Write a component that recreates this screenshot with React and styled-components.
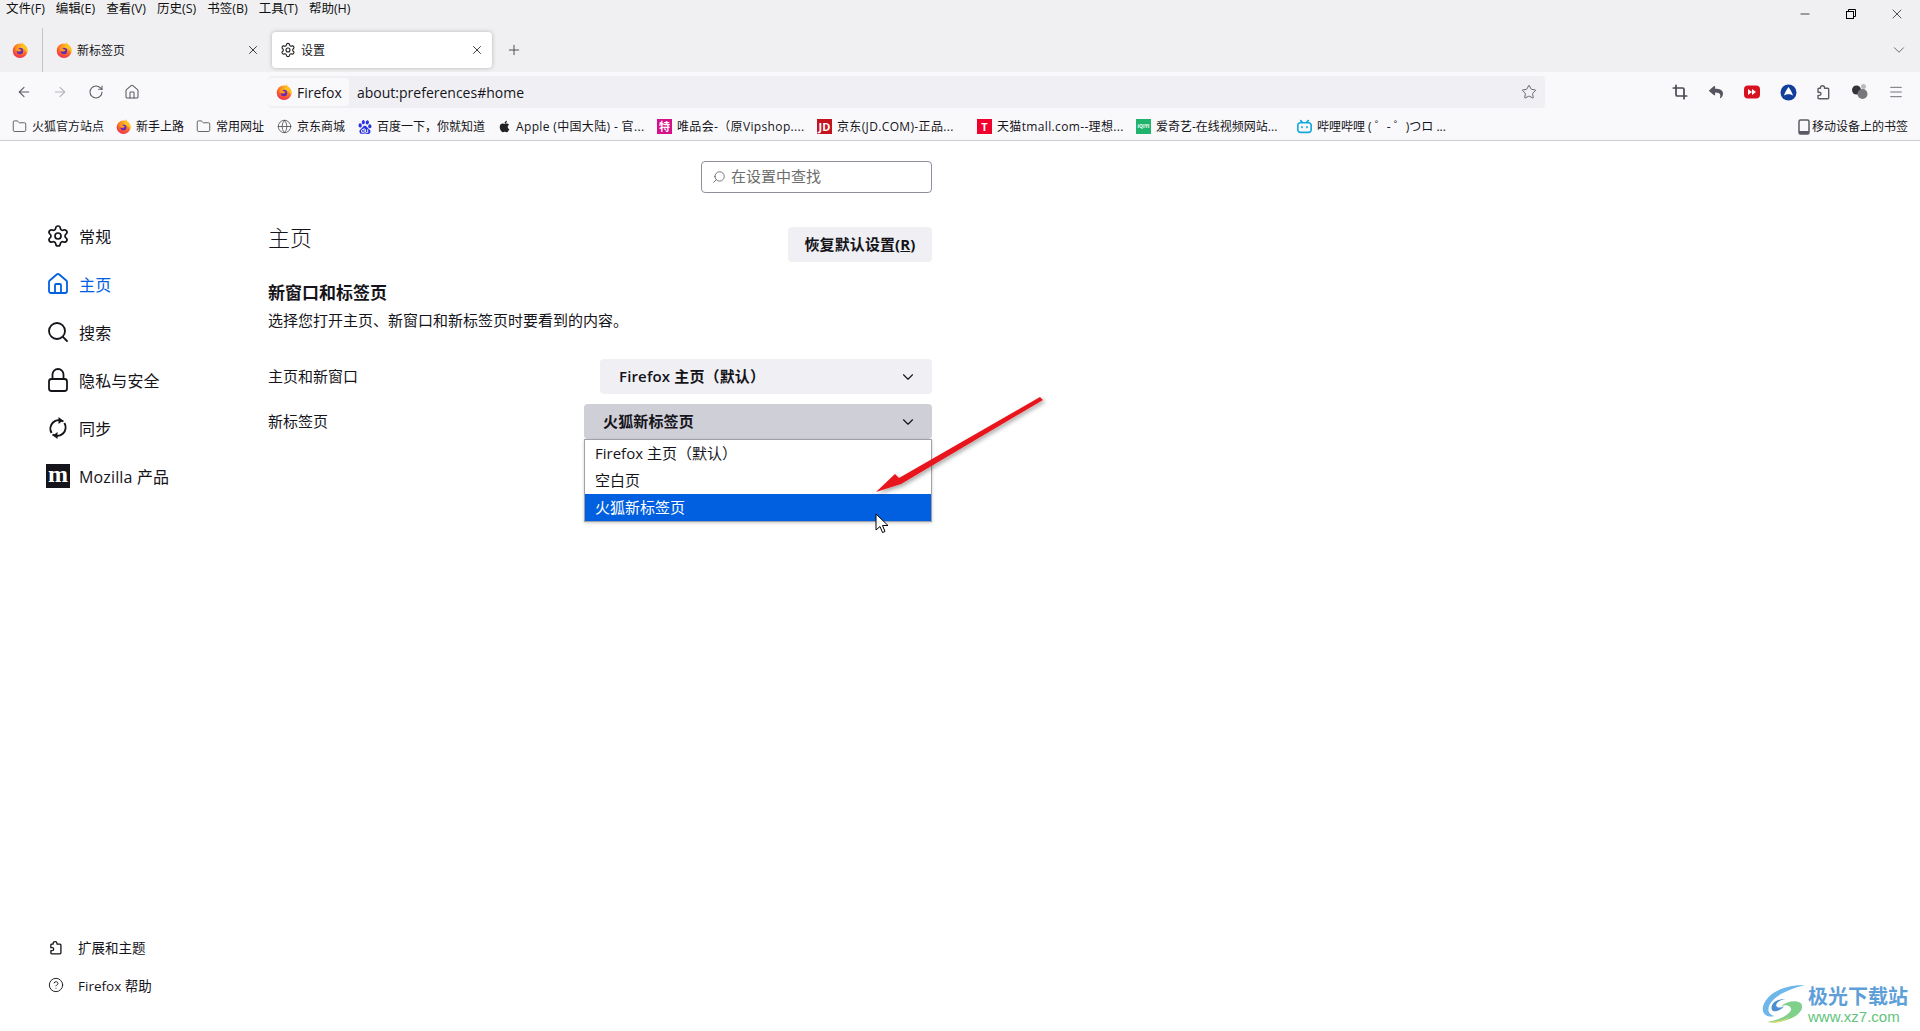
import React from 'react'
import styled, { createGlobalStyle } from 'styled-components'
import {
  ArrowLeft, ArrowRight, RotateCw, House, Star, Crop, Menu as MenuIcon, Folder, Globe,
  Settings, Search, CircleHelp, X, Plus, ChevronDown, Minus,
} from 'lucide-react'
import { FaApple, FaReply } from 'react-icons/fa'
import { SiBaidu, SiBilibili } from 'react-icons/si'

const FONT = `"Open Sans", "Noto Sans CJK SC", sans-serif`

const GlobalStyle = createGlobalStyle`
  html, body { margin: 0; padding: 0; background: #fff; overflow: hidden; }
  body { font-family: ${FONT}; color: #15141a; }
  * { box-sizing: border-box; }
`

const FirefoxLogo = ({ size = 16 }) => (
  <svg width={size} height={size} viewBox="0 0 32 32" style={{ flex: 'none' }}>
    <defs>
      <radialGradient id="ffBody" cx="0.6" cy="0.25" r="0.9">
        <stop offset="0" stopColor="#ffcb2e" />
        <stop offset="0.45" stopColor="#ff7a1f" />
        <stop offset="0.85" stopColor="#f0294f" />
        <stop offset="1" stopColor="#d81b78" />
      </radialGradient>
    </defs>
    <circle cx="16" cy="17.500" r="14.500" fill="url(#ffBody)" />
    <path d="M21 0c1 5 8 7 10 14 1 4 0 7-1 9-1-6-6-9-9-12-2-3-2-7 0-11z" fill="#ffc21f" />
    <circle cx="16" cy="18" r="6.500" fill="#6a2bb0" />
    <path d="M7 13c3-4 8-5 12-3-3 0-5 1-6 3l6 3c-1 2-3 3-6 3-4 0-6-3-6-6z" fill="#ff9a1f" />
  </svg>
)

const Puzzle = ({ size = 16, color = '#15141a' }) => (
  <svg width={size} height={size} viewBox="0 0 16 16" fill="none" stroke={color} strokeWidth="1.4" strokeLinejoin="round" style={{ flex: 'none' }}>
    <path d="M6.5 1.7c1.3 0 2 .8 2 1.8v.8h3.2c.6 0 1 .4 1 1v8.4c0 .6-.4 1-1 1H3c-.6 0-1-.4-1-1v-2.3h1.2c1 0 1.8-.6 1.8-1.6S4.200 8.200 3.200 8.200H2V5.300c0-.6.400-1 1-1h1.500v-.8c0-1 .700-1.800 2-1.800z" />
  </svg>
)

const SyncIcon = () => (
  <svg width="24" height="24" viewBox="0 0 24 24" fill="none" stroke="#15141a" strokeWidth="2">
    <path d="M17.500 5.500A8.500 8.500 0 0 0 5.600 17" />
    <path d="M6.500 18.500A8.500 8.500 0 0 0 18.400 7" />
    <path d="M12.500 1v7l4.500-3.500z" fill="#15141a" stroke="none" />
    <path d="M11.500 23v-7L7 19.500z" fill="#15141a" stroke="none" />
  </svg>
)

const LockIcon = () => (
  <svg width="24" height="24" viewBox="0 0 24 24" fill="none" stroke="#15141a" strokeWidth="1.800">
    <rect x="3" y="11" width="18" height="12" rx="2.500" />
    <path d="M6.500 11V6.500a5.500 5.500 0 0 1 11 0V11" />
  </svg>
)

const RedPlay = () => (
  <svg width="16" height="16" viewBox="0 0 16 16">
    <rect y="1.500" width="16" height="13" rx="4" fill="#d7121f" />
    <path d="M4 5l4 3-4 3zM8 5l4 3-4 3z" fill="#fff" />
  </svg>
)

const BlueRing = () => (
  <svg width="17" height="17" viewBox="0 0 17 17">
    <circle cx="8.500" cy="8.500" r="8" fill="#123f9c" />
    <path d="M8.500 3c1.500 2 3.500 5 4.500 8.500-1.500-1-2.800-1.300-4.500-1.300S5.500 10.500 4 11.500C5 8 7 5 8.500 3z" fill="#fff" />
  </svg>
)

const Balls = () => (
  <svg width="18" height="18" viewBox="0 0 18 18">
    <circle cx="12.500" cy="3.500" r="2.500" fill="#bbb" />
    <circle cx="5.500" cy="7" r="4.500" fill="#33333a" />
    <circle cx="11.500" cy="11" r="5" fill="#77777c" />
  </svg>
)

const PhoneIcon = () => (
  <svg width="12" height="16" viewBox="0 0 12 16" style={{ flex: 'none', marginRight: 2 }}>
    <rect x="1" y="1" width="10" height="14" rx="1.500" fill="none" stroke="#5b5b66" strokeWidth="1.500" />
    <rect x="1" y="12" width="10" height="3" fill="#5b5b66" />
  </svg>
)

const RestoreIcon = () => (
  <svg width="10" height="10" viewBox="0 0 10 10" fill="none" stroke="#000" strokeWidth="1">
    <rect x="0.500" y="2.500" width="7" height="7" />
    <path d="M2.500 2.500v-2h7v7h-2" />
  </svg>
)

const RedArrow = () => (
  <ArrowLayer width="200" height="130" viewBox="860 385 200 130">
    <defs>
      <filter id="arrowShadow" x="-20%" y="-20%" width="140%" height="140%">
        <feDropShadow dx="2" dy="2" stdDeviation="2" floodColor="#000" floodOpacity="0.35" />
      </filter>
    </defs>
    <path d="M1040 397l3 3-142 84 -25 8 19-18 4 4z" fill="#e8141c" filter="url(#arrowShadow)" />
  </ArrowLayer>
)

const PointerCursor = () => (
  <CursorLayer width="14" height="22" viewBox="0 0 14 22">
    <path d="M1 1v16l4-3.500 2.500 6 2.500-1-2.500-6H13z" fill="#fff" stroke="#000" strokeWidth="1" strokeLinejoin="round" />
  </CursorLayer>
)

const Swirl = () => (
  <svg width="46" height="44" viewBox="0 0 42 44" preserveAspectRatio="none">
    <path d="M40 3C22 3 6 10 2 24c-2 8 4 12 10 10C5 32 5 24 12 17 19 10 30 6 40 3z" fill="#6db7ea" />
    <path d="M10 28c-2-6 4-11 12-11 -5 1-9 4-8 7 1 2 4 2 7 0-2 4-9 7-11 4z" fill="#4b8fd0" />
    <path d="M18 24c6-5 14-6 18-3 4 4 0 12-10 16-7 3-14 4-20 3 10-2 18-6 21-11 2-4-3-7-9-5z" fill="#7fd08a" />
    <path d="M6 40c8 0 16-2 21-6-4 5-12 8-21 6z" fill="#e4dc6a" />
  </svg>
)

const menuItems = ['文件(F)', '编辑(E)', '查看(V)', '历史(S)', '书签(B)', '工具(T)', '帮助(H)']

const App = () => {
  const bookmarks = [
    { text: '火狐官方站点', w: 104, icon: <Folder size={15} strokeWidth={1.3} color="#444" /> },
    { text: '新手上路', w: 80, icon: <FirefoxLogo size={15} /> },
    { text: '常用网址', w: 81, icon: <Folder size={15} strokeWidth={1.3} color="#444" /> },
    { text: '京东商城', w: 81, icon: <Globe size={15} strokeWidth={1.2} color="#444" /> },
    { text: '百度一下，你就知道', w: 140, icon: <SiBaidu size={14} color="#2932e1" /> },
    { text: 'Apple (中国大陆) - 官...', w: 159, wide: true, icon: <FaApple size={13} color="#222" /> },
    { text: '唯品会-（原Vipshop....', w: 160, wide: true, icon: <LogoTile $bg="#d6108b">特</LogoTile> },
    { text: '京东(JD.COM)-正品...', w: 160, wide: true, icon: <LogoTile $bg="#c5121f">JD</LogoTile> },
    { text: '天猫tmall.com--理想...', w: 159, wide: true, icon: <LogoTile $bg="#f2002d">T</LogoTile> },
    { text: '爱奇艺-在线视频网站...', w: 161, icon: <LogoTile $bg="#1fb36b" $small>iQIYI</LogoTile> },
    { text: '哔哩哔哩 ( ゜- ゜)つロ ...', w: 170, icon: <SiBilibili size={15} color="#14a9dc" /> },
  ]
  const sideItems = [
    { text: '常规', icon: <Settings size={24} strokeWidth={1.7} /> },
    { text: '主页', icon: <House size={24} strokeWidth={1.8} />, active: true },
    { text: '搜索', icon: <Search size={24} strokeWidth={1.8} /> },
    { text: '隐私与安全', icon: <LockIcon /> },
    { text: '同步', icon: <SyncIcon /> },
    { text: 'Mozilla 产品', icon: <MozillaMark>m</MozillaMark> },
  ]

  return (
    <Page>
      <GlobalStyle />
      <Chrome>
        <TitleBar>
          <MenuBar>
            {menuItems.map((m) => <MenuItem key={m}>{m}</MenuItem>)}
          </MenuBar>
          <WindowControls>
            <WinButton><Minus size={14} strokeWidth={1.2} color="#000" /></WinButton>
            <WinButton><RestoreIcon /></WinButton>
            <WinButton><X size={16} strokeWidth={1} color="#000" /></WinButton>
          </WindowControls>
        </TitleBar>
        <TabRow>
          <PinnedTab><FirefoxLogo size={16} /></PinnedTab>
          <Tab>
            <FirefoxLogo size={16} />
            <TabTitle>新标签页</TabTitle>
            <X size={14} strokeWidth={1.5} color="#222" />
          </Tab>
          <Tab $active>
            <Settings size={16} strokeWidth={1.7} color="#222" />
            <TabTitle>设置</TabTitle>
            <X size={14} strokeWidth={1.5} color="#222" />
          </Tab>
          <NewTab><Plus size={16} strokeWidth={1.4} color="#444" /></NewTab>
          <TabListButton><ChevronDown size={18} strokeWidth={1.2} color="#5b5b66" /></TabListButton>
        </TabRow>
      </Chrome>
      <NavBar>
        <NavButton><ArrowLeft size={16} strokeWidth={1.6} color="#5b5b66" /></NavButton>
        <NavButton><ArrowRight size={16} strokeWidth={1.6} color="#b4b4ba" /></NavButton>
        <NavButton><RotateCw size={16} strokeWidth={1.6} color="#5b5b66" /></NavButton>
        <NavButton><House size={16} strokeWidth={1.6} color="#5b5b66" /></NavButton>
        <UrlBar>
          <IdentityChip><FirefoxLogo size={16} />Firefox</IdentityChip>
          <UrlText>about:preferences#home</UrlText>
          <Star size={16} strokeWidth={1.4} color="#5b5b66" />
        </UrlBar>
        <NavButton><Crop size={16} strokeWidth={2.6} color="#4a4a55" /></NavButton>
        <NavButton><FaReply size={14} color="#55555f" /></NavButton>
        <NavButton><RedPlay /></NavButton>
        <NavButton><BlueRing /></NavButton>
        <NavButton><Puzzle size={16} color="#5b5b66" /></NavButton>
        <NavButton><Balls /></NavButton>
        <NavButton><MenuIcon size={16} strokeWidth={1.3} color="#5b5b66" /></NavButton>
      </NavBar>
      <BookmarkBar>
        {bookmarks.map((b) => (
          <Bookmark key={b.text} $w={b.w}>{b.icon}<BookmarkText $wide={b.wide}>{b.text}</BookmarkText></Bookmark>
        ))}
        <MobileBookmark><PhoneIcon />移动设备上的书签</MobileBookmark>
      </BookmarkBar>
      <Main>
        <Sidebar>
          <SideList>
            {sideItems.map((s) => (
              <SideItem key={s.text} $active={s.active}>
                <SideIcon>{s.icon}</SideIcon>
                {s.text}
              </SideItem>
            ))}
          </SideList>
          <SideFooter>
            <FooterItem><FooterIcon><Puzzle size={15} /></FooterIcon>扩展和主题</FooterItem>
            <FooterItem><FooterIcon><CircleHelp size={16} strokeWidth={1.4} /></FooterIcon>Firefox 帮助</FooterItem>
          </SideFooter>
        </Sidebar>
        <Content>
          <SearchRow>
            <SearchBox>
              <SearchGlyph><Search size={14} strokeWidth={1.4} color="#5b5b66" /></SearchGlyph>
              <RaisedText>在设置中查找</RaisedText>
            </SearchBox>
          </SearchRow>
          <TitleRow>
            <PageTitle>主页</PageTitle>
            <RestoreButton><RaisedText>恢复默认设置(<u>R</u>)</RaisedText></RestoreButton>
          </TitleRow>
          <SectionTitle>新窗口和标签页</SectionTitle>
          <SectionDesc>选择您打开主页、新窗口和新标签页时要看到的内容。</SectionDesc>
          <FormRow>
            <FormLabel>主页和新窗口</FormLabel>
            <Select $w={332}><RaisedText>Firefox 主页（默认）</RaisedText><ChevronDown size={18} strokeWidth={1.5} color="#15141a" /></Select>
          </FormRow>
          <FormRow>
            <FormLabel>新标签页</FormLabel>
            <SelectWrap>
              <Select $w={348} $open><RaisedText>火狐新标签页</RaisedText><ChevronDown size={18} strokeWidth={1.5} color="#15141a" /></Select>
              <Dropdown>
                <Option>Firefox 主页（默认）</Option>
                <Option>空白页</Option>
                <Option $selected>火狐新标签页</Option>
              </Dropdown>
            </SelectWrap>
          </FormRow>
        </Content>
      </Main>
      <RedArrow />
      <PointerCursor />
      <Watermark>
        <Swirl />
        <WatermarkText>
          <WatermarkName>极光下载站</WatermarkName>
          <WatermarkUrl>www.xz7.com</WatermarkUrl>
        </WatermarkText>
      </Watermark>
    </Page>
  )
}

export default App

const Page = styled.div`
  position: relative;
  display: flex;
  flex-direction: column;
  height: 100vh;
  overflow: hidden;
`
const Chrome = styled.header`
  background-color: #f0f0f2;
  height: 72px;
`
const TitleBar = styled.div`
  display: flex;
  justify-content: space-between;
  height: 28px;
`
const MenuBar = styled.div`
  display: flex;
  padding-left: 6px;
  gap: 11px;
`
const MenuItem = styled.span`
  font-size: 12.500px;
  line-height: 18px;
  color: #111;
`
const WindowControls = styled.div`
  display: flex;
`
const WinButton = styled.div`
  width: 46px;
  display: grid;
  place-items: center;
`
const TabRow = styled.div`
  display: flex;
  height: 44px;
`
const PinnedTab = styled.div`
  width: 43px;
  padding-right: 3px;
  display: grid;
  place-items: center;
  border-right: 1px solid #c4c4c8;
`
const Tab = styled.div`
  width: 220px;
  height: 36px;
  margin: 4px 0 0 ${(p) => (p.$active ? '4px' : '5px')};
  padding: 0 8px;
  display: flex;
  align-items: center;
  gap: 5px;
  border-radius: 4px;
  background-color: ${(p) => (p.$active ? '#fff' : 'transparent')};
  box-shadow: ${(p) => (p.$active ? '0 0 4px rgba(0, 0, 0, 0.25)' : 'none')};
`
const TabTitle = styled.span`
  flex: 1;
  padding-top: 1px;
  font-size: 12px;
  line-height: 16px;
`
const NewTab = styled.div`
  width: 44px;
  display: grid;
  place-items: center;
`
const TabListButton = styled.div`
  margin-left: auto;
  width: 42px;
  display: grid;
  place-items: center;
`
const NavBar = styled.div`
  display: flex;
  height: 38px;
  padding: 4px 6px 0;
  background-color: #f9f9fb;
`
const NavButton = styled.div`
  width: 36px;
  height: 32px;
  flex: none;
  display: grid;
  place-items: center;
`
const UrlBar = styled.div`
  flex: 1;
  height: 32px;
  margin: 0 117px 0 118px;
  padding: 2px 8px 2px 0;
  display: flex;
  align-items: center;
  background-color: #f0f0f4;
  border-radius: 4px;
`
const IdentityChip = styled.div`
  width: 81px;
  height: 28px;
  display: flex;
  align-items: center;
  gap: 5px;
  padding-left: 8px;
  background-color: #f9f9fb;
  border-radius: 4px;
  font-size: 14px;
`
const UrlText = styled.div`
  flex: 1;
  margin-left: 8px;
  font-size: 14px;
`
const BookmarkBar = styled.div`
  display: flex;
  align-items: center;
  height: 31px;
  padding: 3px 12px 0;
  background-color: #f9f9fb;
  border-bottom: 1px solid #ccc;
`
const Bookmark = styled.div`
  width: ${(p) => p.$w}px;
  flex: none;
  display: flex;
  align-items: center;
  gap: 5px;
`
const BookmarkText = styled.span`
  font-size: 12px;
  line-height: 16px;
  white-space: nowrap;
  color: #15141a;
  letter-spacing: ${(p) => (p.$wide ? '0.35px' : '0')};
`
const LogoTile = styled.span`
  width: 15px;
  height: 15px;
  flex: none;
  display: grid;
  place-items: center;
  background-color: ${(p) => p.$bg};
  color: #fff;
  font-size: ${(p) => (p.$small ? '5px' : '11px')};
  font-weight: 700;
  line-height: 15px;
`
const MobileBookmark = styled.div`
  margin-left: auto;
  display: flex;
  align-items: center;
  font-size: 12px;
  line-height: 16px;
`
const Main = styled.main`
  flex: 1;
  display: flex;
  background-color: #fff;
`
const Sidebar = styled.nav`
  width: 268px;
  flex: none;
  padding: 71px 0 27px 46px;
  display: flex;
  flex-direction: column;
  justify-content: space-between;
`
const SideList = styled.div`
  display: flex;
  flex-direction: column;
`
const SideItem = styled.div`
  height: 48px;
  display: flex;
  align-items: center;
  gap: 9px;
  font-size: 16px;
  letter-spacing: 0.15px;
  color: ${(p) => (p.$active ? '#0060df' : '#15141a')};
`
const SideIcon = styled.span`
  width: 24px;
  height: 24px;
  display: grid;
  place-items: center;
`
const MozillaMark = styled.span`
  width: 24px;
  height: 24px;
  display: grid;
  place-items: center;
  background-color: #15141a;
  color: #fff;
  font-family: "Liberation Serif", serif;
  font-weight: 700;
  font-size: 24px;
  line-height: 20px;
  padding-bottom: 4px;
`
const SideFooter = styled.div`
  display: flex;
  flex-direction: column;
`
const FooterItem = styled.div`
  height: 38px;
  display: flex;
  align-items: center;
  gap: 14px;
  font-size: 13.500px;
  padding-left: 2px;
`
const FooterIcon = styled.span`
  width: 16px;
  display: grid;
  place-items: center;
`
const Content = styled.section`
  width: 664px;
  padding-top: 20px;
  display: flex;
  flex-direction: column;
`
const SearchRow = styled.div`
  display: flex;
  justify-content: flex-end;
`
const SearchBox = styled.div`
  width: 231px;
  height: 32px;
  display: flex;
  align-items: center;
  gap: 5px;
  padding-left: 10px;
  border: 1px solid #8f8f9d;
  border-radius: 4px;
  font-size: 15px;
  color: #6d6d6d;
`
const RaisedText = styled.span`
  position: relative;
  top: -1.500px;
`
const SearchGlyph = styled.span`
  display: grid;
  transform: scaleX(-1);
`
const TitleRow = styled.div`
  margin-top: 34px;
  display: flex;
  justify-content: space-between;
  align-items: flex-start;
`
const PageTitle = styled.h1`
  margin: 0;
  font-size: 22px;
  line-height: 20px;
  font-weight: 300;
`
const RestoreButton = styled.button`
  all: unset;
  width: 144px;
  height: 35px;
  display: grid;
  place-items: center;
  background-color: #f0f0f4;
  border-radius: 4px;
  font-size: 15px;
  font-weight: 700;
  letter-spacing: 0.1px;
`
const SectionTitle = styled.h2`
  margin: 19px 0 0;
  font-size: 17px;
  line-height: 24px;
  font-weight: 700;
`
const SectionDesc = styled.p`
  margin: 5px 0 29px;
  font-size: 15px;
  line-height: 20px;
`
const FormRow = styled.div`
  display: flex;
  justify-content: space-between;
  align-items: center;
  height: 35px;
  margin-bottom: 10px;
`
const FormLabel = styled.span`
  font-size: 15px;
  line-height: 20px;
  position: relative;
  top: -1px;
`
const SelectWrap = styled.div`
  position: relative;
`
const Select = styled.div`
  width: ${(p) => p.$w}px;
  height: 35px;
  padding: 0 15px 0 19px;
  display: flex;
  align-items: center;
  justify-content: space-between;
  border-radius: 4px;
  background-color: ${(p) => (p.$open ? '#cfcfd8' : '#f0f0f4')};
  font-size: 15px;
  font-weight: 600;
  letter-spacing: 0.15px;
`
const Dropdown = styled.div`
  position: absolute;
  top: 35px;
  left: 0;
  width: 348px;
  background-color: #fff;
  border: 1px solid #a0a0a8;
  box-shadow: 0 1px 3px rgba(0, 0, 0, 0.2);
`
const Option = styled.div`
  height: 27px;
  padding: 0 0 2px 10px;
  display: flex;
  align-items: center;
  font-size: 15px;
  background-color: ${(p) => (p.$selected ? '#0060df' : 'transparent')};
  color: ${(p) => (p.$selected ? '#fff' : '#15141a')};
`
const ArrowLayer = styled.svg`
  position: absolute;
  left: 860px;
  top: 385px;
`
const CursorLayer = styled.svg`
  position: absolute;
  left: 875px;
  top: 513px;
`
const Watermark = styled.div`
  position: absolute;
  right: 12px;
  bottom: 5px;
  display: flex;
  align-items: center;
  gap: 1px;
`
const WatermarkText = styled.div`
  display: flex;
  flex-direction: column;
`
const WatermarkName = styled.span`
  font-size: 20px;
  line-height: 24px;
  font-weight: 700;
  color: #5f9fd8;
`
const WatermarkUrl = styled.span`
  font-family: "Liberation Sans", sans-serif;
  font-size: 15px;
  line-height: 15px;
  color: #62c47c;
`
